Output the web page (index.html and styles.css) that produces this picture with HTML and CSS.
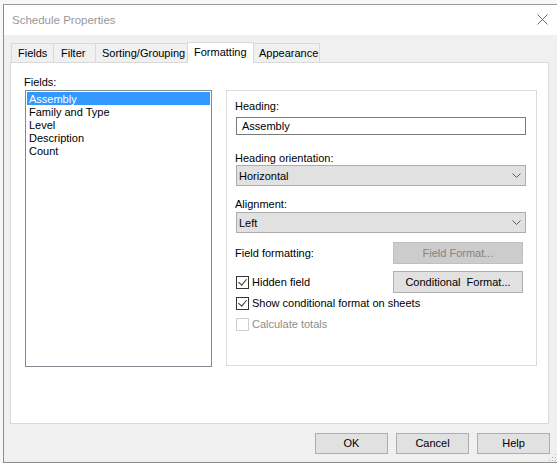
FILE: index.html
```html
<!DOCTYPE html>
<html>
<head>
  <title>Schedule Properties</title>
  <link rel="stylesheet" href="styles.css">
</head>
<body>
  <div class="window">
    <div class="titlebar">
      <span class="title">Schedule Properties</span>
      <svg class="close" width="11" height="11" viewBox="0 0 11 11">
        <path d="M0.5 0.5 L10.5 10.5 M10.5 0.5 L0.5 10.5" stroke="#6b6b6b" stroke-width="1" fill="none"/>
      </svg>
    </div>
    <div class="content">
      <div class="tabs">
        <div class="tab tab-fields">Fields</div>
        <div class="tab tab-filter">Filter</div>
        <div class="tab tab-sorting">Sorting/Grouping</div>
        <div class="tab tab-formatting selected">Formatting</div>
        <div class="tab tab-appearance">Appearance</div>
      </div>
      <div class="panel">
        <div class="left">
          <div class="label">Fields:</div>
          <div class="listbox">
            <div class="item active">Assembly</div>
            <div class="item">Family and Type</div>
            <div class="item">Level</div>
            <div class="item">Description</div>
            <div class="item">Count</div>
          </div>
        </div>
        <div class="group">
          <div class="label">Heading:</div>
          <div class="textbox">Assembly</div>
          <div class="label label-orient">Heading orientation:</div>
          <div class="select">
            <span>Horizontal</span>
            <svg width="9" height="5" viewBox="0 0 9 5"><path d="M0.5 0.5 L4.5 4.5 L8.5 0.5" stroke="#5c5c5c" fill="none"/></svg>
          </div>
          <div class="label label-align">Alignment:</div>
          <div class="select select-align">
            <span>Left</span>
            <svg width="9" height="5" viewBox="0 0 9 5"><path d="M0.5 0.5 L4.5 4.5 L8.5 0.5" stroke="#5c5c5c" fill="none"/></svg>
          </div>
          <div class="row row-format">
            <span>Field formatting:</span>
            <div class="button disabled">Field Format...</div>
          </div>
          <div class="row row-hidden">
            <label class="check"><span class="box checked"></span>Hidden field</label>
            <div class="button">Conditional&nbsp; Format...</div>
          </div>
          <label class="check check-show"><span class="box checked"></span>Show conditional format on sheets</label>
          <label class="check check-totals dim"><span class="box"></span>Calculate totals</label>
        </div>
      </div>
      <div class="footer">
        <div class="button">OK</div>
        <div class="button">Cancel</div>
        <div class="button">Help</div>
      </div>
    </div>
    <svg class="grip" width="8" height="8" viewBox="0 0 8 8">
      <rect x="6" y="0" width="1" height="1" fill="#b5b5b5"/>
      <rect x="3" y="3" width="1" height="1" fill="#b5b5b5"/>
      <rect x="6" y="3" width="1" height="1" fill="#b5b5b5"/>
      <rect x="0" y="6" width="1" height="1" fill="#b5b5b5"/>
      <rect x="3" y="6" width="1" height="1" fill="#b5b5b5"/>
      <rect x="6" y="6" width="1" height="1" fill="#b5b5b5"/>
    </svg>
  </div>
</body>
</html>
```

FILE: styles.css
```css
body{
 margin: 0;
 background-color: #f7f7f7;
 font-family: "Liberation Sans", Arial, sans-serif;
 font-size: 11px;
 color: #000;
 overflow: hidden;
 height: 463px;
}
.window{
 margin: 4px 0 0 3px;
 width: 570px;
 height: 457px;
 border-left: 1px solid #8c8c8c;
 border-top: 1px solid #9c9c9c;
 border-bottom: 1px solid #8c8c8c;
 background-color: #f0f0f0;
 display: flex;
 flex-direction: column;
 position: relative;
}
.titlebar{
 height: 30px;
 background-color: #fff;
 display: flex;
 align-items: center;
 position: relative;
}
.title{
 margin-left: 8px;
 font-size: 11.5px;
 color: #999;
}
.close{
 position: absolute;
 left: 533px;
 top: 9px;
}
.content{
 flex: 1;
 display: flex;
 flex-direction: column;
}
.tabs{
 display: flex;
 margin: 7px 0 0 7px;
 height: 20px;
 align-items: flex-end;
}
.tab{
 border: 1px solid #d9d9d9;
 border-bottom: none;
 margin-right: -1px;
 padding: 0 0 0 6px;
 box-sizing: border-box;
 height: 19px;
 line-height: 19px;
 background-color: #f0f0f0;
}
.tab-fields{ width: 43px; }
.tab-filter{ width: 43px; padding-left: 7px; }
.tab-sorting{ width: 93px; }
.tab-formatting{ width: 67px; }
.tab-appearance{ width: 67px; padding-left: 5px; }
.tab.selected{
 height: 21px;
 line-height: 19px;
 background-color: #fff;
 position: relative;
 z-index: 1;
 margin-bottom: -1px;
}
.panel{
 margin-left: 6px;
 width: 539px;
 height: 362px;
 box-sizing: border-box;
 border: 1px solid #d9d9d9;
 background-color: #fff;
 display: flex;
 align-items: flex-start;
 padding: 11px 0 0 13px;
}
.label{
 line-height: 17px;
 height: 15px;
}
.listbox{
 margin: 1px 0 0 1px;
 width: 187px;
 height: 277px;
 box-sizing: border-box;
 border: 1px solid #828790;
 padding: 1px;
}
.item{
 height: 13px;
 line-height: 15px;
 padding-left: 2px;
 overflow: hidden;
}
.item.active{
 background-color: #3399ff;
 color: #fff;
}
.group{
 margin: 16px 0 0 14px;
 width: 311px;
 height: 276px;
 box-sizing: border-box;
 border: 1px solid #dcdcdc;
 padding: 7px 0 0 8px;
 display: flex;
 flex-direction: column;
}
.textbox{
 margin: 4px 0 0 1px;
 width: 290px;
 height: 18px;
 box-sizing: border-box;
 border: 1px solid #7a7a7a;
 padding-left: 5px;
 line-height: 16px;
}
.label-orient{ margin-top: 15px; }
.label-align{ margin-top: 10px; }
.select{
 margin: 0 0 0 1px;
 width: 290px;
 height: 21px;
 box-sizing: border-box;
 border: 1px solid #adadad;
 background-color: #e1e1e1;
 display: flex;
 align-items: center;
 justify-content: space-between;
 padding: 0 4px 0 2px;
}
.select-align{ margin-top: 1px; }
.row{
 display: flex;
 align-items: center;
 justify-content: space-between;
 width: 288px;
}
.row-format{ margin-top: 9px; }
.row-hidden{ margin-top: 7px; }
.button{
 width: 130px;
 height: 22px;
 box-sizing: border-box;
 border: 1px solid #adadad;
 background-color: #e1e1e1;
 text-align: center;
 line-height: 20px;
}
.button.disabled{
 background-color: #cccccc;
 border-color: #bfbfbf;
 color: #838383;
}
.check{
 display: flex;
 align-items: center;
 height: 14px;
 margin-left: 1px;
}
.box{
 width: 13px;
 height: 13px;
 box-sizing: border-box;
 border: 1px solid #333;
 margin-right: 3px;
 background-color: #fff;
 position: relative;
}
.box.checked::after{
 content: "";
 position: absolute;
 left: 3px;
 top: 0px;
 width: 4px;
 height: 7px;
 border-right: 1px solid #333;
 border-bottom: 1px solid #333;
 transform: rotate(40deg);
}
.check-show{ margin-top: 3px; }
.check-totals{ margin-top: 7px; }
.dim{ color: #8d8d8d; }
.dim .box{ border-color: #cfcfcf; }
.footer{
 display: flex;
 gap: 8px;
 margin: 9px 0 0 311px;
}
.footer .button{
 width: 73px;
 height: 21px;
 line-height: 19px;
}
.grip{
 position: absolute;
 left: 545px;
 top: 449px;
}
```
